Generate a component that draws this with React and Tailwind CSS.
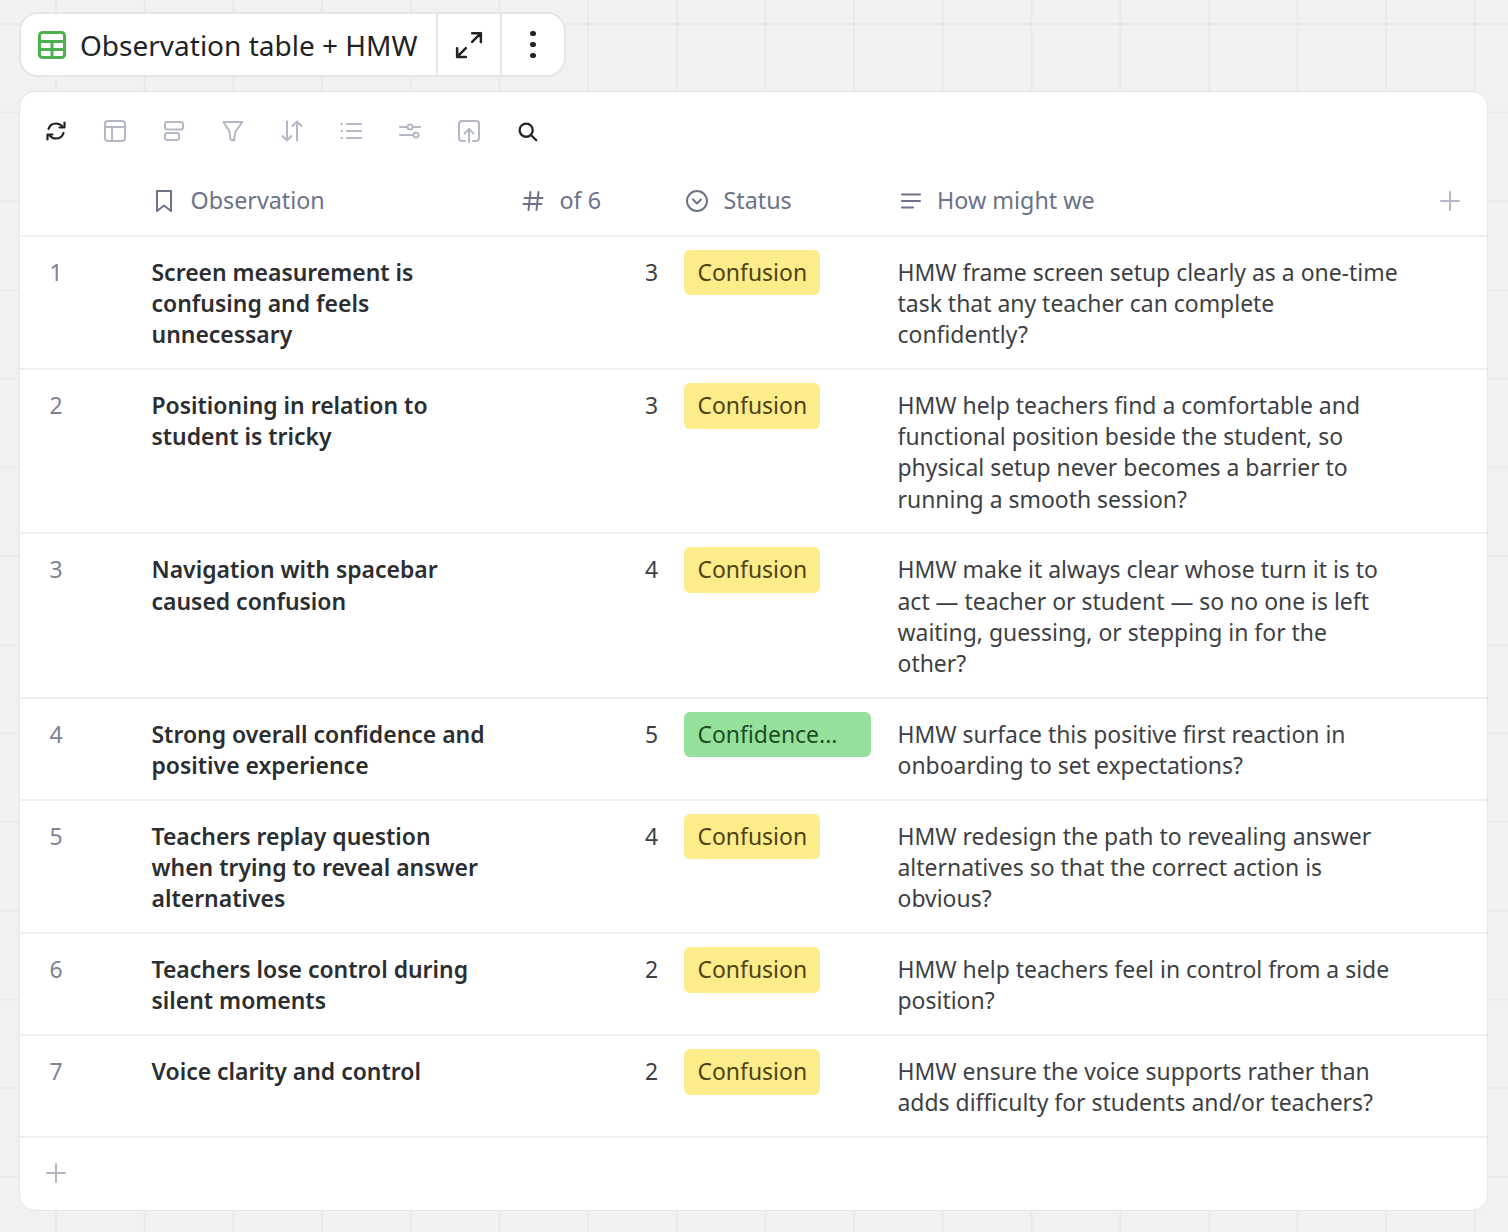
const FONT = "font-['Noto_Sans','Liberation_Sans',sans-serif]";

const rows = [
  { n: 1, t: ["Screen measurement is", "confusing and feels", "unnecessary"], c: 3, s: "Confusion", h: ["HMW frame screen setup clearly as a one-time", "task that any teacher can complete", "confidently?"] },
  { n: 2, t: ["Positioning in relation to", "student is tricky"], c: 3, s: "Confusion", h: ["HMW help teachers find a comfortable and", "functional position beside the student, so", "physical setup never becomes a barrier to", "running a smooth session?"] },
  { n: 3, t: ["Navigation with spacebar", "caused confusion"], c: 4, s: "Confusion", h: ["HMW make it always clear whose turn it is to", "act — teacher or student — so no one is left", "waiting, guessing, or stepping in for the", "other?"] },
  { n: 4, t: ["Strong overall confidence and", "positive experience"], c: 5, s: "Confidence...", h: ["HMW surface this positive first reaction in", "onboarding to set expectations?"] },
  { n: 5, t: ["Teachers replay question", "when trying to reveal answer", "alternatives"], c: 4, s: "Confusion", h: ["HMW redesign the path to revealing answer", "alternatives so that the correct action is", "obvious?"] },
  { n: 6, t: ["Teachers lose control during", "silent moments"], c: 2, s: "Confusion", h: ["HMW help teachers feel in control from a side", "position?"] },
  { n: 7, t: ["Voice clarity and control"], c: 2, s: "Confusion", h: ["HMW ensure the voice supports rather than", "adds difficulty for students and/or teachers?"] },
];

const Ico = ({ children, size = 24, className = "", sw = 2 }) => (
  <svg width={size} height={size} viewBox="0 0 24 24" fill="none" stroke="currentColor" strokeWidth={sw} strokeLinecap="round" strokeLinejoin="round" className={className}>
    {children}
  </svg>
);

const toolbar = [
  { c: "text-[#1f2328]", sw: 2.2, p: <><path d="M4.500 10C5.500 6.800 8.500 4.500 12 4.500c2.800 0 5 1.200 6.500 3.200" /><path d="M20.500 3.500v5h-5" /><path d="M19.500 14C18.500 17.200 15.500 19.500 12 19.500c-2.800 0-5-1.200-6.500-3.200" /><path d="M3.500 20.500v-5h5" /></> },
  { c: "text-[#b4b7c6]", p: <><rect x="2" y="2" width="20" height="20" rx="3" /><path d="M2 8h20M9 8v14" /></> },
  { c: "text-[#b4b7c6]", p: <><rect x="3" y="3" width="18" height="7.500" rx="2" /><rect x="3" y="14" width="14" height="7" rx="2" /></> },
  { c: "text-[#b4b7c6]", p: <path d="M2.500 3h19l-7 9.500-1.500 9-3.500-1-1-8z" /> },
  { c: "text-[#b4b7c6]", p: <><path d="M7 2.500v19M2.500 17l4.500 4.500 4.500-4.500" /><path d="M17 21.500v-19M12.500 7 17 2.500 21.500 7" /></> },
  { c: "text-[#b4b7c6]", p: <path d="M8 5h14M8 12h14M8 19h14M2.500 5h.5M2.500 12h.5M2.500 19h.5" /> },
  { c: "text-[#b4b7c6]", p: <><path d="M2 8h7M15 8h7M2 16h13" /><circle cx="12" cy="8" r="2.500" /><circle cx="18" cy="16" r="2.500" /></> },
  { c: "text-[#b4b7c6]", p: <><path d="M8 22H5a3 3 0 0 1-3-3V5a3 3 0 0 1 3-3h14a3 3 0 0 1 3 3v14a3 3 0 0 1-3 3h-3" /><path d="M12 23V10M7.500 14.500 12 10l4.500 4.500" /></> },
  { c: "text-[#1f2328]", sw: 2.6, s: 21, p: <><circle cx="10.500" cy="10.500" r="7.500" /><path d="m16 16 6 6" /></> },
];

const cols = "grid grid-cols-[117.500px_373px_160px_214px_1fr]";

const Th = ({ icon, label, iconGap }) => (
  <div className={`flex items-center ${iconGap} pl-[13px] text-[23.300px] text-[#6b7289]`}>
    {icon}
    <span>{label}</span>
  </div>
);

export default function App() {
  return (
    <div className={`${FONT} min-h-[1232px] bg-[#f1f1f1] bg-[linear-gradient(to_right,#e9e9ea_2px,transparent_2px),linear-gradient(to_bottom,#e9e9ea_2px,transparent_2px)] bg-[size:88.700px_88.700px] bg-[position:55px_23px] pt-3 pl-[19px] pr-5`}>
      <div className="flex h-[65px] w-[547px] items-stretch rounded-[19px] border-2 border-[#e5e5ea] bg-white">
        <div className="flex flex-1 items-center gap-[14px] pl-[17px] text-[28px] text-[#1f2328]">
          <svg width="28" height="28" viewBox="0 0 28 28" fill="none" stroke="#4caf50" strokeWidth="3">
            <rect x="1.500" y="1.500" width="25" height="25" rx="3" />
            <path d="M1.500 10.500h25M1.500 18.500h25M14 10.500v16" />
          </svg>
          <span>Observation table + HMW</span>
        </div>
        <div className="flex w-[64px] items-center justify-center border-l-2 border-[#e5e5ea] text-[#1f2328]">
          <Ico size={30}>
            <path d="M14.500 9.500 21.500 2.500M14.500 2.500h7v7" />
            <path d="M9.500 14.500 2.500 21.500M2.500 14.500v7h7" />
          </Ico>
        </div>
        <div className="flex w-[64px] items-center justify-center border-l-2 border-[#e5e5ea]">
          <div className="flex flex-col gap-[5.500px]">
            <span className="size-[5.500px] rounded-full bg-[#1f2328]" />
            <span className="size-[5.500px] rounded-full bg-[#1f2328]" />
            <span className="size-[5.500px] rounded-full bg-[#1f2328]" />
          </div>
        </div>
      </div>

      <div className="mt-[14px] w-[1469px] overflow-hidden rounded-[16px] border-[1.500px] border-[#e5e5ea] bg-white">
        <div className="flex h-[76.500px] items-center pt-[2px] pl-[6px]">
          {toolbar.map((t, i) => (
            <div key={i} className={`flex w-[59px] justify-center ${t.c}`}>
              <Ico size={t.s || 24} sw={t.sw || 2}>{t.p}</Ico>
            </div>
          ))}
        </div>

        <div className={`${cols} h-[68px] items-center border-b-2 border-[#eeeef3] pb-[2px]`}>
          <div />
          <Th icon={<Ico size={24} className="ml-[1px]"><path d="M5 2h14v20l-7-5.500L5 22z" /></Ico>} label="Observation" iconGap="gap-[15px]" />
          <Th icon={<Ico size={24} className="-ml-[3px]"><path d="M9.500 3 7.500 21M17.500 3l-2 18M3.500 9h18M2.500 15h18" /></Ico>} label="of 6" iconGap="gap-[15px]" />
          <Th icon={<Ico size={24} className="ml-[1.500px]"><circle cx="12" cy="12" r="10" /><path d="m8 10.500 4 4 4-4" /></Ico>} label="Status" iconGap="gap-[14.500px]" />
          <div className="flex items-center justify-between pr-[25.500px]">
            <Th icon={<Ico size={24} className="ml-[1px]"><path d="M3 5.500h18M3 12h18M3 18.500h11" /></Ico>} label="How might we" iconGap="gap-[14.500px]" />
            <Ico size={24} className="text-[#b4b7c6]"><path d="M12 3v18M3 12h18" /></Ico>
          </div>
        </div>

        {rows.map((r) => (
          <div key={r.n} className={`${cols} border-b-2 border-[#eeeef3] text-[22.950px] leading-[31.200px]`}>
            <div className="pt-[20.300px] pb-[17.300px] pl-[29.500px] text-[#7c8294]">{r.n}</div>
            <div className="pt-[20.300px] pb-[17.300px] pl-[14px] font-semibold text-[#2b2d30]">
              {r.t.map((l) => <div key={l}>{l}</div>)}
            </div>
            <div className="pt-[20.300px] pb-[17.300px] pr-[12.500px] text-right text-[#3d3f44]">{r.c}</div>
            <div className="px-[13px] pt-[13.300px]">
              <span className={`block h-[45.500px] rounded-[6px] pl-[14px] pr-[12px] leading-[45px] ${r.s === "Confusion" ? "w-[136px] bg-[#fdec8a] text-[#4d4213]" : "w-[187px] bg-[#95e19b] text-[#1c4d25]"}`}>{r.s}</span>
            </div>
            <div className="pt-[20.300px] pb-[17.300px] pl-[13px] text-[#3d3f44]">
              {r.h.map((l) => <div key={l}>{l}</div>)}
            </div>
          </div>
        ))}

        <div className="flex h-[72px] items-center pb-[2px] pl-[23.500px] text-[#b4b7c6]">
          <Ico size={24}><path d="M12 3v18M3 12h18" /></Ico>
        </div>
      </div>
    </div>
  );
}
